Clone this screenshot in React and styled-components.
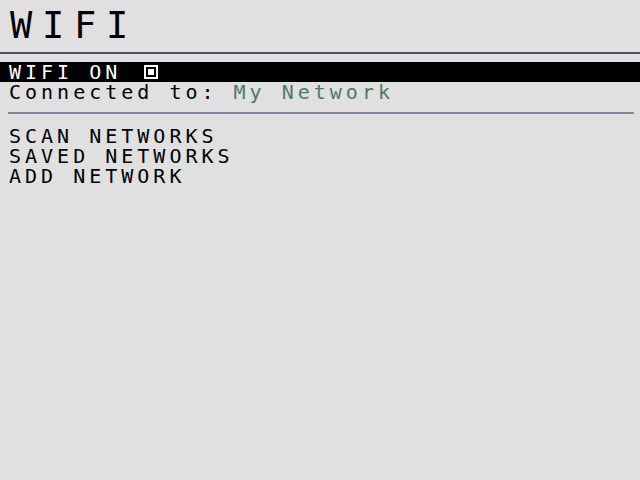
import React from 'react';
import styled, { createGlobalStyle } from 'styled-components';

const GlobalStyle = createGlobalStyle`
	html, body {
		margin: 0;
		padding: 0;
		background: #e0e0e0;
	}
	body {
		font-family: 'DejaVu Sans Mono', 'Liberation Mono', monospace;
		color: #000;
	}
`;

const Screen = styled.div`
	width: 640px;
	height: 480px;
	background: #e0e0e0;
	display: flex;
	flex-direction: column;
	overflow: hidden;
`;

const Title = styled.h1`
	margin: 0;
	padding-left: 10px;
	font-size: 37px;
	font-weight: normal;
	line-height: 52px;
	letter-spacing: 9.7px;
`;

const Rule = styled.div`
	height: 2px;
	background: ${(p) => (p.light ? '#84849c' : '#50506a')};
	margin: ${(p) => (p.light ? '10px 6px 0 8px' : '0')};
`;

const Section = styled.div`
	display: flex;
	flex-direction: column;
	margin-top: ${(p) => p.top || 0}px;
`;

const Line = styled.div`
	display: flex;
	align-items: center;
	height: 20px;
	padding-left: 9px;
	font-size: 20px;
	line-height: 20px;
	letter-spacing: 4px;
	white-space: pre;
	background: ${(p) => (p.selected ? '#000' : 'transparent')};
	color: ${(p) => (p.selected ? '#fff' : '#000')};
`;

const Value = styled.span`
	color: #4d7a64;
`;

const Check = styled.span`
	box-sizing: border-box;
	width: 14px;
	height: 14px;
	margin-left: 23px;
	border: 2px solid #fff;
	display: flex;
	align-items: center;
	justify-content: center;

	&::after {
		content: '';
		width: 6px;
		height: 6px;
		background: ${(p) => (p.on ? '#fff' : 'transparent')};
	}
`;

const menu = ['SCAN NETWORKS', 'SAVED NETWORKS', 'ADD NETWORK'];

const App = () => {
	const wifiOn = true;
	const network = 'My Network';

	return (
		<Screen>
			<GlobalStyle />
			<Title>WIFI</Title>
			<Rule />
			<Section top={8}>
				<Line selected>
					WIFI ON
					<Check on={wifiOn} />
				</Line>
				<Line>
					Connected to: <Value>{network}</Value>
				</Line>
			</Section>
			<Rule light />
			<Section top={12}>
				{menu.map((item) => (
					<Line key={item}>{item}</Line>
				))}
			</Section>
		</Screen>
	);
};

export default App;
